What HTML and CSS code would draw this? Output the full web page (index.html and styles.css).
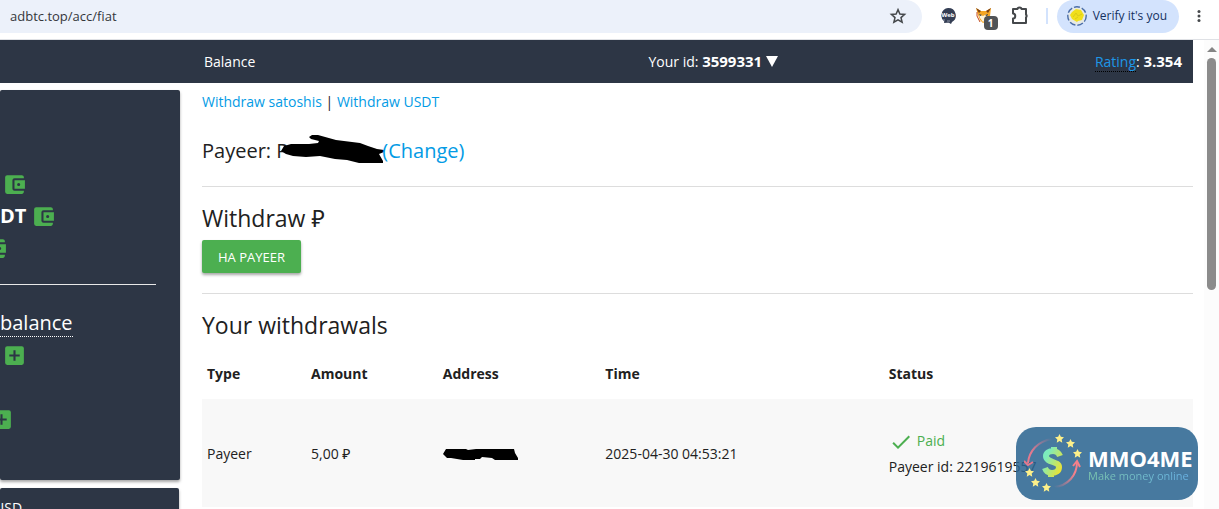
FILE: index.html
```html
<!DOCTYPE html>
<html lang="en">
<head>
  <meta charset="UTF-8">
  <meta name="viewport" content="width=device-width, initial-scale=1.0">
  <title>Withdraw</title>
  <link rel="stylesheet" href="styles.css">
</head>
<body>
  <svg class="defs" aria-hidden="true">
    <symbol id="wallet" viewBox="0 0 24 24">
      <path d="M21 18v1c0 1.100-.9 2-2 2H5a2 2 0 0 1-2-2V5a2 2 0 0 1 2-2h14c1.100 0 2 .9 2 2v1h-9a2 2 0 0 0-2 2v8a2 2 0 0 0 2 2h9zm-9-2h10V8H12v8zm4-2.500a1.500 1.500 0 1 1 0-3 1.500 1.500 0 0 1 0 3z"/>
    </symbol>
    <symbol id="add" viewBox="0 0 24 24">
      <path d="M19 3H5a2 2 0 0 0-2 2v14a2 2 0 0 0 2 2h14a2 2 0 0 0 2-2V5a2 2 0 0 0-2-2zm-2 10h-4v4h-2v-4H7v-2h4V7h2v4h4v2z"/>
    </symbol>
    <symbol id="star" viewBox="-6 -6 12 12">
      <path d="M0-6 1.800-2.200 6-1.700 2.900 1.300 3.700 5.500 0 3.400-3.700 5.500-2.900 1.300-6-1.700-1.800-2.200z"/>
    </symbol>
  </svg>

  <!-- Browser bar -->
  <header class="toolbar">
    <div class="omnibox">
      <input class="url" type="text" value="adbtc.top/acc/fiat" aria-label="Address">
      <button class="tool" aria-label="Bookmark">
        <svg width="18" height="18" viewBox="0 0 24 24" fill="none" stroke="#45484b" stroke-width="2"><path d="M12 3.500l2.500 5.900 6.300.5-4.800 4.200 1.500 6.200L12 17l-5.500 3.300L8 14.100 3.200 9.900l6.300-.5z"/></svg>
      </button>
    </div>
    <button class="tool ext" aria-label="Web">
      <svg width="18" height="18" viewBox="0 0 18 18"><path d="M9 1a7.500 7.500 0 0 1 4 14l-1 2-2-1.300H8L5 16l.3-1.600A7.500 7.500 0 0 1 9 1z" fill="#343e54"/><path d="M4 13h2m2 1h3" stroke="#8d96a8"/><text x="9" y="10" text-anchor="middle" font-size="6" font-weight="700" fill="#fff">Web</text></svg>
    </button>
    <button class="tool ext" aria-label="Fox, 1 notice">
      <svg width="20" height="20" viewBox="0 0 20 20"><path d="M2 2l5 3h5l5-3-1 8-3 5-4 2-3-3-2-5z" fill="#f5a623"/><path d="M2 2l5 3-2 2zM17 2l-5 3 2 2z" fill="#7a3f12"/><path d="M5 8l4 2 4-2-1 5-3 3-3-4z" fill="#fff3d8"/><path d="M5 8l3 1-2 1zm9 0l-3 1 2 1z" fill="#2b2b2b"/><path d="M3 6v4l3 6" fill="none" stroke="#c44a1c"/></svg>
      <span class="badge">1</span>
    </button>
    <button class="tool ext" aria-label="Extensions">
      <svg width="20" height="20" viewBox="0 0 20 20" fill="none" stroke="#45484b" stroke-width="2" stroke-linejoin="round"><path d="M3 3h4.500a2 1.500 0 0 1 4 0H16v5.500a1.500 2 0 0 1 0 3V17H3v-4.500c3 0 3-5 0-5z"/></svg>
    </button>
    <span class="split"></span>
    <button class="profile">
      <svg width="20" height="20" viewBox="0 0 20 20"><circle cx="10" cy="10" r="9.200" fill="#e6e9e4" stroke="#4a6da8" stroke-width="1.400" stroke-dasharray="6 2"/><path d="M5 6l4-3 5 1 3 5-2 5-4 1-1 1-5-3-2-4z" fill="#f1df1b"/><path d="M6 11l3-4 2 3 4-2M8 13l3-2" fill="none" stroke="#dccb18"/></svg>
      Verify it's you
    </button>
    <button class="tool menu" aria-label="Menu">
      <svg width="18" height="18" viewBox="0 0 18 18" fill="#45484b"><circle cx="9" cy="4" r="1.700"/><circle cx="9" cy="9" r="1.700"/><circle cx="9" cy="14" r="1.700"/></svg>
    </button>
  </header>

  <div class="viewport">
    <div class="page">
      <nav class="topnav">
        <a class="nav-balance" href="#">Balance</a>
        <a class="nav-id" href="#">Your id: <b>3599331</b>
          <svg width="12" height="11" viewBox="0 0 12 11" fill="#fff"><path d="M0 0h12L6 11z"/></svg></a>
        <span class="nav-rating"><a href="#">Rating</a>: <b>3.354</b></span>
      </nav>

      <div class="columns">
        <aside class="sidebar">
          <div class="card card-main">
            <div class="row"><svg class="icon"><use href="#wallet"/></svg></div>
            <div class="row"><b>DT</b><svg class="icon"><use href="#wallet"/></svg></div>
            <div class="row cut"><svg class="icon"><use href="#wallet"/></svg></div>
            <hr class="side-line">
            <div class="row"><span class="dotted">balance</span></div>
            <div class="row"><svg class="icon"><use href="#add"/></svg></div>
            <div class="row"></div>
            <div class="row cut-add"><svg class="icon"><use href="#add"/></svg></div>
          </div>
          <div class="card card-rate">USD</div>
        </aside>

        <main class="content">
          <p class="links"><a href="#">Withdraw satoshis</a> | <a href="#">Withdraw USDT</a></p>
          <h2 class="payeer">Payeer: P<svg class="scrawl" width="104" height="28" viewBox="0 0 104 28"><path d="M1 16l3-5 7-2 18 0 9-1 1-2-8-2-2-2 3-2 6 0 18 5 24 3 8 3 9 3 7 1v2l-5 2 4 7v2H79l-12-3-12-1-15-3-14 1-13-1-7-2z"/></svg><a href="#">(Change)</a></h2>
          <hr>
          <h1>Withdraw ₽</h1>
          <button class="btn">HA PAYEER</button>
          <hr>
          <h1>Your withdrawals</h1>
          <table>
            <thead>
              <tr><th class="c-type">Type</th><th class="c-amount">Amount</th><th class="c-address">Address</th><th class="c-time">Time</th><th>Status</th></tr>
            </thead>
            <tbody>
              <tr>
                <td>Payeer</td>
                <td>5,00 ₽</td>
                <td><svg class="scrawl-small" width="76" height="13" viewBox="0 0 76 13"><path d="M0 6l3-5h20l2 1 8-1h38l1 4 3 5v2H52l-3-2-10-1-2 2h-5v1H20L8 10H4l-2-2z"/></svg></td>
                <td>2025-04-30 04:53:21</td>
                <td>
                  <div class="paid"><svg width="24" height="24" viewBox="0 0 24 24" fill="#4caf50"><path d="M9 16.200L4.800 12l-1.400 1.400L9 19 21 7l-1.400-1.400z"/></svg>Paid</div>
                  <div>Payeer id: 2219619557</div>
                </td>
              </tr>
            </tbody>
          </table>
        </main>
      </div>
    </div>
    <div class="scrollbar"><span class="arrow"></span><span class="thumb"></span></div>
  </div>

  <!-- Logo over the page corner -->
  <div class="watermark">
    <svg width="64" height="66" viewBox="0 0 64 66">
      <defs>
        <linearGradient id="money" x1="0" y1="0" x2="1" y2="1"><stop offset="0.200" stop-color="#7cebbd"/><stop offset="0.900" stop-color="#e8e337"/></linearGradient>
        <linearGradient id="fadeA" x1="0" y1="1" x2="1" y2="0"><stop offset="0.300" stop-color="#e5798e"/><stop offset="1" stop-color="#e5798e" stop-opacity="0"/></linearGradient>
        <linearGradient id="fadeB" x1="1" y1="0" x2="0" y2="1"><stop offset="0.300" stop-color="#f5808a"/><stop offset="1" stop-color="#f5808a" stop-opacity="0"/></linearGradient>
      </defs>
      <path d="M28 8C14 10 5 20 4 32" fill="none" stroke="url(#fadeA)" stroke-width="2"/>
      <path d="M0 30l4 4 5-3" fill="none" stroke="#e5798e" stroke-width="2"/>
      <path d="M30 56C44 55 53 44 53 31" fill="none" stroke="url(#fadeB)" stroke-width="2"/>
      <path d="M49 35l4-5 3 6" fill="none" stroke="#f5808a" stroke-width="2"/>
      <path d="M36 25c-1-3-4-5-7-5-4 0-7 2-7 5 0 7 13 5 13 11 0 4-3 6-7 6-4 0-6-2-7-5M30 16v5M27 40v6" fill="none" stroke="url(#money)" stroke-width="6"/>
      <g fill="#fdf08a">
        <use href="#star" x="31" y="3" width="9" height="9"/>
        <use href="#star" x="42" y="8" width="9" height="9"/>
        <use href="#star" x="49" y="18" width="9" height="9"/>
        <use href="#star" x="1" y="37" width="9" height="9"/>
        <use href="#star" x="7" y="47" width="9" height="9"/>
        <use href="#star" x="18" y="52" width="9" height="9"/>
      </g>
    </svg>
    <div class="brand"><strong>MMO4ME</strong><span>Make money online</span></div>
  </div>
</body>
</html>
```
FILE: styles.css
```css
:root {
  --dark:#2d3645;
  --green:#4caf50;
  --link:#039be5;
  --text:#212121;
}
*{box-sizing:border-box;}
body{
  margin:0;
  height:100vh;
  display:flex;
  flex-direction:column;
  overflow:hidden;
  font-family:'Open Sans','Noto Sans',sans-serif;
  font-size:14px;
  line-height:20px;
  color:var(--text);
  background:#fff;
}
.defs{display:none;}
a{color:var(--link);text-decoration:none;}
button{font:inherit;border:0;background:none;padding:0;cursor:pointer;}
h1,h2{font-weight:400;margin:0;}
hr{border:0;border-top:1px solid #ddd;margin:0;}

/* Browser bar */
.toolbar{display:flex;align-items:center;height:40px;padding:0 12px 7px 0;border-bottom:1px solid #dfe1e5;}
.omnibox{flex:1;display:flex;align-items:center;height:33px;padding:0 14px 0 10px;margin-right:16px;background:#ecf1fa;border-radius:0 17px 17px 0;}
.url{flex:1;border:0;padding:0;background:none;font:inherit;font-size:13px;color:#34373b;}
.tool{position:relative;display:flex;align-items:center;justify-content:center;width:20px;height:32px;}
.ext{margin-right:16px;}
.badge{position:absolute;right:-4px;bottom:2px;width:14px;height:14px;border-radius:4px;background:#505356;color:#fff;font-size:10px;font-weight:700;line-height:14px;text-align:center;}
.split{width:2px;height:16px;margin-right:9px;background:#d3e3fd;}
.profile{display:flex;align-items:center;gap:6px;height:33px;padding:0 12px 0 10px;margin-right:12px;border-radius:17px;background:#d3e3fd;color:#14315f;font-size:12px;}
.menu{width:16px;}

/* Page */
.viewport{flex:1;display:flex;min-height:0;overflow:hidden;}
.page{flex:1;padding-right:11px;}
.topnav{display:grid;grid-template-columns:5fr 4fr 2fr;align-items:center;height:43px;padding:0 11px 0 204px;background:var(--dark);color:#fff;}
.topnav a{color:#fff;}
.topnav b{font-size:15px;}
.nav-rating{text-align:right;}
.topnav .nav-rating a{color:#1e96e8;border-bottom:1px dotted #000;}
.columns{display:flex;align-items:flex-start;gap:22px;padding-top:7px;}
.sidebar{width:180px;flex:none;}
.card{background:var(--dark);color:#fff;border-radius:2px;box-shadow:0 2px 3px rgba(0,0,0,.35);overflow:hidden;}
.card-main{height:390px;padding-top:78px;font-size:20px;}
.card-rate{height:60px;margin-top:8px;padding-top:10px;margin-right:1px;text-indent:-6px;}
.row{display:flex;align-items:center;height:32px;}
.icon{width:25px;height:25px;margin-left:2px;fill:var(--green);flex:none;}
.row b{margin-right:3px;}
.cut .icon{margin-left:-17px;}
.cut-add .icon{margin-left:-11px;}
.side-line{margin:20px 24px 22px 0;border-color:#e8e8e8;}
.dotted{line-height:26px;border-bottom:1px dotted #fff;}

/* Content */
.content{flex:1;min-width:0;}
.links{margin:2px 0 26px;}
.payeer{font-size:20px;line-height:26px;margin-bottom:22px;}
.scrawl{margin:-10px -2px -5px -8px;}
h1{font-size:23px;line-height:28px;padding-top:17px;}
.btn{display:block;height:33px;margin:8px 0 20px;padding:0 16px;border-radius:2px;background:var(--green);color:#fff;font-size:13px;box-shadow:0 2px 3px rgba(0,0,0,.35);}
table{width:100%;margin-top:10px;border-collapse:collapse;table-layout:fixed;}
th,td{padding:0 5px;text-align:left;}
th{height:50px;}
td{height:108px;padding-top:2px;}
tbody tr{background:#f8f8f8;}
td div{line-height:26px;white-space:nowrap;}
.c-type{width:10.5%;}
.c-amount{width:13.3%;}
.c-address{width:16.4%;}
.c-time{width:28.6%;}
.scrawl-small{display:block;}
.paid{display:flex;align-items:flex-end;gap:4px;color:var(--green);}

.scrollbar{width:15px;display:flex;flex-direction:column;align-items:center;background:#fcfcfc;padding-top:7px;gap:6px;}
.arrow{border:5px solid transparent;border-top:0;border-bottom:5px solid #858585;}
.thumb{width:9px;height:232px;border-radius:5px;background:#8b8b8b;}

/* Watermark */
.watermark{position:absolute;right:21px;bottom:9px;display:flex;align-items:center;width:182px;height:73px;padding-left:8px;border-radius:20px;background:rgba(42,100,144,.86);}
.brand{display:flex;flex-direction:column;color:#fff;white-space:nowrap;padding-top:3px;}
.brand strong{font-size:22px;line-height:22px;}
.brand span{font-size:11px;line-height:14px;background:linear-gradient(90deg,#7cc7ad,#69b3e8);background-clip:text;color:transparent;}
```
